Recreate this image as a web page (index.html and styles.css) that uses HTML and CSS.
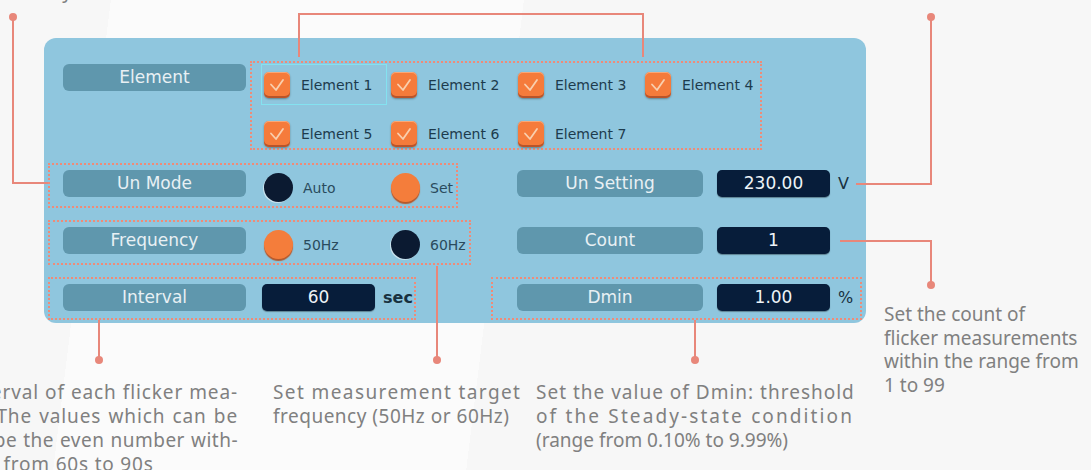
FILE: index.html
```html
<!DOCTYPE html>
<html>
<head>
  <meta charset="UTF-8">
  <title>Flicker Settings</title>
  <meta name="viewport" content="width=device-width, initial-scale=1.0">
  <link rel="stylesheet" href="styles.css">
</head>
<body>
  <div class="stage">
    <div class="note note-top">Select the Un mode: Auto or set it manually</div>

    <section class="panel">
      <div class="row-top">
        <div class="tag tag-el">Element</div>
        <div class="group">
          <div class="item focus"><span class="check"><svg viewBox="0 0 26 26"><polyline points="7,12.5 12,18 19,8"/></svg></span>Element 1</div>
          <div class="item"><span class="check"><svg viewBox="0 0 26 26"><polyline points="7,12.5 12,18 19,8"/></svg></span>Element 2</div>
          <div class="item"><span class="check"><svg viewBox="0 0 26 26"><polyline points="7,12.5 12,18 19,8"/></svg></span>Element 3</div>
          <div class="item"><span class="check"><svg viewBox="0 0 26 26"><polyline points="7,12.5 12,18 19,8"/></svg></span>Element 4</div>
          <div class="item"><span class="check"><svg viewBox="0 0 26 26"><polyline points="7,12.5 12,18 19,8"/></svg></span>Element 5</div>
          <div class="item"><span class="check"><svg viewBox="0 0 26 26"><polyline points="7,12.5 12,18 19,8"/></svg></span>Element 6</div>
          <div class="item"><span class="check"><svg viewBox="0 0 26 26"><polyline points="7,12.5 12,18 19,8"/></svg></span>Element 7</div>
        </div>
      </div>

      <div class="cols">
        <div class="col col-left">
          <div class="field boxed f-mode">
            <div class="tag">Un Mode</div>
            <div class="opt opt-first"><span class="dot dark"></span>Auto</div>
            <div class="opt"><span class="dot orange"></span>Set</div>
          </div>
          <div class="field boxed f-freq">
            <div class="tag">Frequency</div>
            <div class="opt opt-first"><span class="dot orange"></span>50Hz</div>
            <div class="opt"><span class="dot dark"></span>60Hz</div>
          </div>
          <div class="field boxed f-int">
            <div class="tag">Interval</div>
            <div class="value v-int">60</div>
            <span class="unit">sec</span>
          </div>
        </div>

        <div class="col col-right">
          <div class="field">
            <div class="tag">Un Setting</div>
            <div class="value">230.00</div>
            <span class="unit">V</span>
          </div>
          <div class="field">
            <div class="tag">Count</div>
            <div class="value">1</div>
          </div>
          <div class="field boxed f-dmin">
            <div class="tag">Dmin</div>
            <div class="value">1.00</div>
            <span class="unit">%</span>
          </div>
        </div>
      </div>
    </section>

    <svg class="wires" width="1091" height="470" viewBox="0 0 1091 470">
      <g fill="none" stroke="#e8877a" stroke-width="2">
        <path d="M13 17 V183 H48"/>
        <path d="M299 57 V14 H643 V57"/>
        <path d="M931 17 V184 H856"/>
        <path d="M840 241 H931 V285"/>
        <path d="M99 320 V360"/>
        <path d="M437 266 V360"/>
        <path d="M695 320 V360"/>
      </g>
      <g fill="#e8877a">
        <circle cx="13" cy="17" r="4"/>
        <circle cx="931" cy="17" r="4"/>
        <circle cx="931" cy="285" r="4"/>
        <circle cx="99" cy="360" r="4"/>
        <circle cx="437" cy="360" r="4"/>
        <circle cx="695" cy="360" r="4"/>
      </g>
    </svg>

    <div class="note note-int">
      <div class="ln j s4">Set the interval of each flicker mea-</div>
      <div class="ln j s4">surement. The values which can be</div>
      <div class="ln j s6">set should be the even number with-</div>
      <div class="ln s5 ln-last">in the range from 60s to 90s</div>
    </div>

    <div class="note note-freq">
      <div class="ln j s2">Set measurement target</div>
      <div class="ln s0">frequency (50Hz or 60Hz)</div>
    </div>

    <div class="note note-dmin">
      <div class="ln j s1">Set the value of Dmin: threshold</div>
      <div class="ln j s3">of the Steady-state condition</div>
      <div class="ln">(range from 0.10% to 9.99%)</div>
    </div>

    <div class="note note-count">
      <div class="ln">Set the count of</div>
      <div class="ln">flicker measurements</div>
      <div class="ln">within the range from</div>
      <div class="ln">1 to 99</div>
    </div>
  </div>
</body>
</html>
```

FILE: styles.css
```css
body {
  margin: 0;
  background: #f8f8f8;
  font-family: "DejaVu Sans", sans-serif;
}

.stage {
  position: relative;
  width: 1091px;
  height: 470px;
  overflow: hidden;
  background:
    linear-gradient(97deg, transparent 0 110px, #fbfbfb 110px 520px, transparent 520px),
    #f7f7f7;
}

/* main settings panel */
.panel {
  position: relative;
  box-sizing: border-box;
  width: 822px;
  height: 285px;
  margin: 38px 0 0 44px;
  padding: 23px 4px 3px;
  background: #8fc6de;
  border-radius: 12px;
}

.row-top {
  display: flex;
  height: 89px;
}

.tag {
  flex: none;
  width: 183px;
  height: 27px;
  line-height: 27px;
  margin-left: 13px;
  background: #5f97ad;
  border-radius: 6px;
  color: #e8f0f4;
  font-size: 17px;
  text-align: center;
}

.tag-el {
  margin: 3px 0 0 15px;
}

.group {
  box-sizing: border-box;
  width: 512px;
  height: 89px;
  margin-left: 4px;
  padding: 1px 0 0 9px;
  border: 2px dotted #ef8b78;
  display: grid;
  grid-template-columns: repeat(4, 127px);
  grid-auto-rows: 41px;
  row-gap: 8px;
}

.item {
  display: flex;
  align-items: center;
  gap: 11px;
  padding-left: 2px;
  border: 1px solid transparent;
  color: #1d3b4d;
  font-size: 14px;
}

.focus {
  width: 122px;
  border-color: #84e2f0;
}

.check {
  flex: none;
  width: 26px;
  height: 26px;
  background: #f57b3b;
  border-radius: 5px;
  box-shadow: inset 0 1px 0 #f9a878, inset 0 -2px 0 #b9542a, 0 1px 2px rgba(40, 30, 20, 0.4);
}

.check svg {
  display: block;
  width: 26px;
  height: 26px;
}

.check polyline {
  fill: none;
  stroke: #f9cfae;
  stroke-width: 1.8;
  stroke-linecap: round;
  stroke-linejoin: round;
}

.cols {
  display: flex;
  gap: 20px;
  margin-top: 13px;
}

.col {
  display: flex;
  flex-direction: column;
  gap: 12px;
}

.col-left {
  width: 423px;
}

.col-right {
  width: 371px;
}

.field {
  box-sizing: border-box;
  display: flex;
  align-items: flex-start;
  height: 45px;
  padding-top: 5px;
  border: 2px dotted transparent;
}

.boxed {
  border-color: #ef8b78;
}

.f-mode { width: 410px; }
.f-freq { width: 423px; }
.f-int { width: 368px; height: 43px; }
.f-dmin { width: 371px; height: 43px; }

.col-right .tag {
  width: 186px;
  margin-left: 24px;
}

.opt {
  flex: none;
  display: flex;
  align-items: center;
  gap: 10px;
  width: 127px;
  margin-top: 3px;
  color: #2a4b5d;
  font-size: 14px;
}

.opt-first {
  margin-left: 18px;
}

.dot {
  flex: none;
  width: 29px;
  height: 29px;
  border-radius: 50%;
}

.dark {
  background: #0b1a31;
  box-shadow: -1px 1px 0 rgba(225, 238, 244, 0.7);
}

.orange {
  background: #f47d3b;
  box-shadow: 0 2px 1px #b4582c;
}

.value {
  flex: none;
  width: 113px;
  height: 27px;
  line-height: 27px;
  margin-left: 14px;
  background: #071d3a;
  border-radius: 5px;
  box-shadow: 0 1px 1px rgba(0, 0, 0, 0.35);
  color: #eef3f7;
  font-size: 17px;
  text-align: center;
}

.v-int {
  margin-left: 16px;
}

.unit {
  margin-left: 8px;
  line-height: 27px;
  color: #17303f;
  font-size: 16px;
}

.f-int .unit {
  font-weight: bold;
}

/* connector lines */
.wires {
  position: absolute;
  left: 0;
  top: 0;
  pointer-events: none;
}

/* callout texts */
.note {
  position: absolute;
  font-family: "Noto Sans", sans-serif;
  font-size: 19px;
  line-height: 24px;
  color: #808080;
  white-space: nowrap;
}

.note .j {
  text-align: justify;
  text-align-last: justify;
}

.s0 { letter-spacing: 0.5px; }
.s1 { letter-spacing: 1px; }
.s2 { letter-spacing: 1.4px; }
.s3 { letter-spacing: 2.1px; }
.s4 { letter-spacing: 0.9px; }
.s5 { letter-spacing: 0.8px; }
.s6 { letter-spacing: 0.5px; }

.note-top {
  top: -21px;
  right: 1019px;
}

.note-int {
  top: 380px;
  left: -110px;
  width: 348px;
}

.note-int .ln-last {
  margin-left: -10px;
}

.note-freq {
  top: 380px;
  left: 273px;
  width: 248px;
}

.note-dmin {
  top: 380px;
  left: 536px;
  width: 318px;
}

.note-count {
  top: 303px;
  left: 884px;
  line-height: 23.5px;
}
```
